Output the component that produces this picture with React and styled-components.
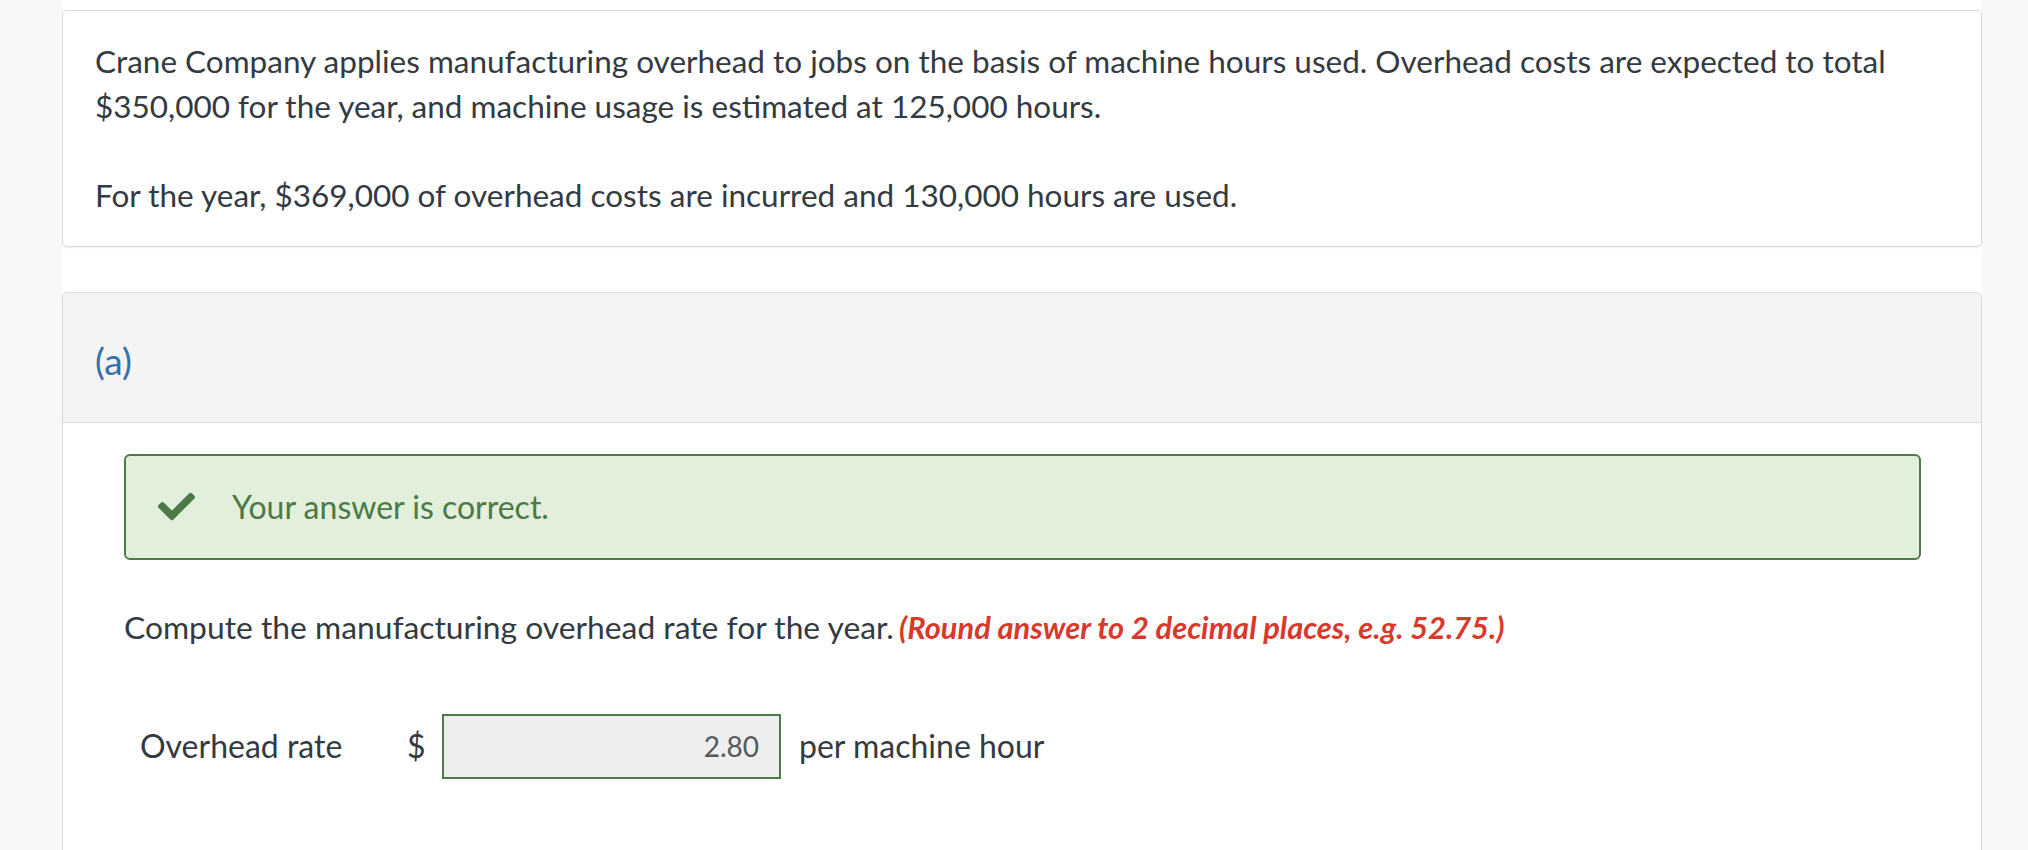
import React from "react";
import styled, { createGlobalStyle } from "styled-components";

const GlobalStyle = createGlobalStyle`
  html, body {
    margin: 0;
    padding: 0;
    background: #f8f8f8;
  }
  body {
    font-family: Lato, "Open Sans", "Liberation Sans", sans-serif;
    -webkit-font-smoothing: antialiased;
  }
  * { box-sizing: border-box; }
`;

const Column = styled.main`
  margin-left: 62px;
  width: 1920px;
  min-height: 100vh;
  background: #ffffff;
  padding-top: 10px;
  overflow: hidden;
`;

const Card = styled.section`
  border: 1px solid #d9d9d9;
  border-radius: 5px;
  background: #ffffff;
  box-shadow: 0 1px 2px rgba(0, 0, 0, 0.06);
`;

const IntroCard = styled(Card)`
  padding: 28px 32px;
  display: flex;
  flex-direction: column;
  gap: 44.7px;
`;

const Para = styled.p`
  margin: 0;
  font-size: 31.5px;
  line-height: 44.7px;
  color: #333a41;
`;

const PartCard = styled(Card)`
  margin-top: 45px;
  border-bottom: none;
  border-radius: 5px 5px 0 0;
  box-shadow: none;
`;

const PartHeader = styled.header`
  height: 130px;
  background: #f4f4f4;
  border-bottom: 1px solid #dcdcdc;
  border-radius: 5px 5px 0 0;
  display: flex;
  align-items: center;
  padding-left: 32px;
`;

const PartLabel = styled.h2`
  margin: 0;
  font-weight: 400;
  font-size: 37px;
  line-height: 1;
  color: #3170a8;
  padding-top: 6px;
`;

const PartBody = styled.div`
  padding: 31px 60px 120px 61px;
`;

const Notice = styled.div`
  height: 106px;
  border: 2px solid #4d7b47;
  border-radius: 6px;
  background: #e1efdb;
  display: flex;
  align-items: center;
  padding-left: 32px;
  gap: 37px;
  color: #4b7a46;
  font-size: 32px;
`;

const CheckIcon = () => (
  <svg width="37" height="29" viewBox="0 64 512 384" fill="#4b7a46" aria-hidden="true">
    <path d="M173.898 439.404l-166.4-166.4c-9.997-9.997-9.997-26.206 0-36.204l36.203-36.204c9.997-9.998 26.207-9.998 36.204 0L192 312.69 432.095 72.596c9.997-9.997 26.207-9.997 36.204 0l36.203 36.204c9.997 9.997 9.997 26.206 0 36.204l-294.4 294.401c-9.998 9.997-26.207 9.997-36.204-.001z" />
  </svg>
);

const Question = styled.p`
  margin: 45px 0 0;
  font-size: 31.8px;
  line-height: 44.7px;
  color: #333a41;
`;

const Hint = styled.span`
  color: #d8392b;
  font-weight: 700;
  font-style: italic;
  font-size: 30.8px;
  margin-left: -3px;
`;

const AnswerRow = styled.div`
  margin-top: 63px;
  display: flex;
  align-items: center;
  font-size: 32px;
  line-height: 44.7px;
  color: #333a41;
`;

const RowLabel = styled.div`
  width: 283px;
  padding-left: 16px;
`;

const Currency = styled.div`
  width: 35px;
`;

const AnswerBox = styled.div`
  width: 339px;
  height: 65px;
  border: 2px solid #4d7b47;
  background: #eeeeee;
  display: flex;
  align-items: center;
  justify-content: flex-end;
  padding-right: 20px;
  font-size: 28px;
  color: #555a5f;
`;

const Unit = styled.div`
  margin-left: 18px;
`;

export default function App() {
  return (
    <>
      <GlobalStyle />
      <Column>
        <IntroCard>
          <Para>
            Crane Company applies manufacturing overhead to jobs on the basis of machine hours used. Overhead costs are expected to total $350,000 for the year, and machine usage is estimated at 125,000 hours.
          </Para>
          <Para>
            For the year, $369,000 of overhead costs are incurred and 130,000 hours are used.
          </Para>
        </IntroCard>
        <PartCard>
          <PartHeader>
            <PartLabel>(a)</PartLabel>
          </PartHeader>
          <PartBody>
            <Notice>
              <CheckIcon />
              <span>Your answer is correct.</span>
            </Notice>
            <Question>
              Compute the manufacturing overhead rate for the year.{" "}
              <Hint>(Round answer to 2 decimal places, e.g. 52.75.)</Hint>
            </Question>
            <AnswerRow>
              <RowLabel>Overhead rate</RowLabel>
              <Currency>$</Currency>
              <AnswerBox>2.80</AnswerBox>
              <Unit>per machine hour</Unit>
            </AnswerRow>
          </PartBody>
        </PartCard>
      </Column>
    </>
  );
}
